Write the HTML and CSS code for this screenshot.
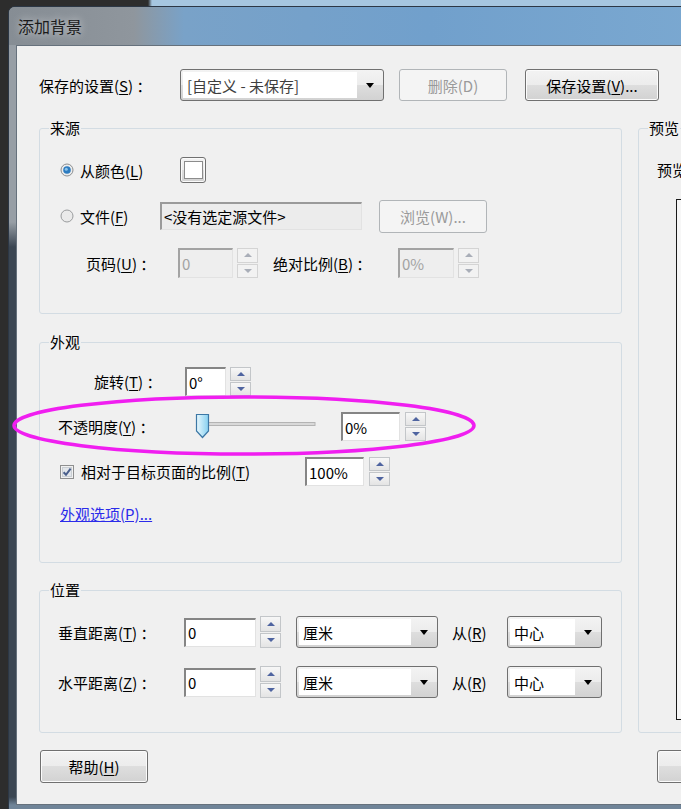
FILE: index.html
```html
<!DOCTYPE html>
<html lang="zh-CN">
  <head>
    <meta charset="UTF-8" />
    <title>添加背景</title>
    <link rel="stylesheet" href="styles.css">
  </head>
  <body>
    <div class="window">
      <div class="titlebar">添加背景</div>

      <div class="client">
        <div class="top-row">
          <span class="top-label">保存的设置(<u>S</u>) ：</span>
          <div class="combo combo-preset">
            <span class="combo-field combo-muted">[自定义 - 未保存]</span>
            <span class="combo-btn"><span class="arrow"></span></span>
          </div>
          <button class="btn btn-delete" disabled>删除(D)</button>
          <button class="btn btn-save">保存设置(<u>V</u>)...</button>
        </div>

        <div class="main">
          <div class="left-col">
            <!-- source -->
            <fieldset class="group">
              <legend>来源</legend>
              <div class="group-body source-body">
                <div class="row row-color">
                  <label class="radio-opt opt-color">
                    <svg width="14" height="14" viewBox="0 0 14 14">
                      <circle cx="7" cy="7" r="6" fill="#ececec" stroke="#8c8e90" />
                      <circle cx="7" cy="7" r="3.8" fill="#2d7cc0" />
                      <circle cx="6.3" cy="6.2" r="1.5" fill="#8cc3ea" />
                    </svg>
                    <span>从颜色(<u>L</u>)</span>
                  </label>
                  <button class="btn swatch"><span class="swatch-inner"></span></button>
                </div>

                <div class="row row-file">
                  <label class="radio-opt opt-file">
                    <svg width="14" height="14" viewBox="0 0 14 14">
                      <circle cx="7" cy="7" r="6" fill="#eaeaea" stroke="#9a9c9e" />
                    </svg>
                    <span>文件(<u>F</u>)</span>
                  </label>
                  <div class="field field-file">&lt;没有选定源文件&gt;</div>
                  <button class="btn btn-browse" disabled>浏览(W)...</button>
                </div>

                <div class="row row-page">
                  <span class="lbl lbl-page">页码(<u>U</u>) ：</span>
                  <div class="field field-disabled field-page">0</div>
                  <div class="spin spin-disabled"><span class="spin-up"></span><span class="spin-down"></span></div>
                  <span class="lbl lbl-scale">绝对比例(<u>B</u>) ：</span>
                  <div class="field field-disabled field-scale">0%</div>
                  <div class="spin spin-disabled"><span class="spin-up"></span><span class="spin-down"></span></div>
                </div>
              </div>
            </fieldset>

            <!-- appearance -->
            <fieldset class="group group-look">
              <legend>外观</legend>
              <div class="group-body look-body">
                <div class="row row-rotate">
                  <span class="lbl lbl-rotate">旋转(<u>T</u>) ：</span>
                  <div class="field field-rotate">0°</div>
                  <div class="spin"><span class="spin-up"></span><span class="spin-down"></span></div>
                </div>

                <div class="row row-opacity">
                  <span class="lbl lbl-opacity">不透明度(<u>Y</u>) ：</span>
                  <svg class="slider" width="121" height="29" viewBox="0 0 121 29">
                    <rect x="13" y="10.5" width="107" height="3" fill="#d9d9d9" stroke="#b4b4b4" stroke-width="1" />
                    <defs>
                      <linearGradient id="thumb" x1="0" y1="0" x2="1" y2="0">
                        <stop offset="0" stop-color="#e9f8fe" />
                        <stop offset="1" stop-color="#86d0f0" />
                      </linearGradient>
                    </defs>
                    <path d="M1.5 2.5 H13.5 V19 L7.5 25.5 L1.5 19 Z" fill="url(#thumb)" stroke="#3c77a5" stroke-width="1.2" />
                  </svg>
                  <div class="field field-opacity">0%</div>
                  <div class="spin spin-opacity"><span class="spin-up"></span><span class="spin-down"></span></div>
                </div>

                <div class="row row-ratio">
                  <svg class="check" width="14" height="14" viewBox="0 0 14 14">
                    <rect x="0.5" y="0.5" width="13" height="13" fill="#f1f1f1" stroke="#8e8f8f" />
                    <rect x="2.5" y="2.5" width="9" height="9" fill="#e2e6ea" stroke="#c9ced3" />
                    <path d="M3.6 7.2 L6 9.8 L10.6 3.6" fill="none" stroke="#4a5f8c" stroke-width="2" />
                  </svg>
                  <span class="lbl lbl-ratio">相对于目标页面的比例(<u>T</u>)</span>
                  <div class="field field-ratio">100%</div>
                  <div class="spin spin-ratio"><span class="spin-up"></span><span class="spin-down"></span></div>
                </div>

                <div class="row row-link">
                  <a href="#" class="look-link">外观选项(P)...</a>
                </div>
              </div>
            </fieldset>

            <!-- position -->
            <fieldset class="group group-pos">
              <legend>位置</legend>
              <div class="group-body pos-body">
                <div class="row row-pos">
                  <span class="lbl lbl-pos">垂直距离(<u>T</u>) ：</span>
                  <div class="field field-pos">0</div>
                  <div class="spin"><span class="spin-up"></span><span class="spin-down"></span></div>
                  <div class="combo combo-unit">
                    <span class="combo-field">厘米</span>
                    <span class="combo-btn"><span class="arrow"></span></span>
                  </div>
                  <span class="lbl lbl-from">从(<u>R</u>)</span>
                  <div class="combo combo-from">
                    <span class="combo-field">中心</span>
                    <span class="combo-btn"><span class="arrow"></span></span>
                  </div>
                </div>

                <div class="row row-pos row-pos2">
                  <span class="lbl lbl-pos">水平距离(<u>Z</u>) ：</span>
                  <div class="field field-pos">0</div>
                  <div class="spin"><span class="spin-up"></span><span class="spin-down"></span></div>
                  <div class="combo combo-unit">
                    <span class="combo-field">厘米</span>
                    <span class="combo-btn"><span class="arrow"></span></span>
                  </div>
                  <span class="lbl lbl-from">从(<u>R</u>)</span>
                  <div class="combo combo-from">
                    <span class="combo-field">中心</span>
                    <span class="combo-btn"><span class="arrow"></span></span>
                  </div>
                </div>
              </div>
            </fieldset>
          </div>

          <!-- preview -->
          <fieldset class="group group-preview">
            <legend>预览</legend>
            <div class="group-body preview-body">
              <div class="preview-label">预览</div>
              <div class="preview-box"></div>
            </div>
          </fieldset>
        </div>

        <div class="bottom-row">
          <button class="btn btn-help">帮助(<u>H</u>)</button>
          <button class="btn btn-ok"></button>
        </div>
      </div>
    </div>

    <svg class="annotation" width="481" height="74" viewBox="0 0 481 74">
      <ellipse cx="240" cy="36.5" rx="230" ry="28.5" fill="none" stroke="#f01ef0" stroke-width="3.5" />
    </svg>
  </body>
</html>
```

FILE: styles.css
```css
body {
  margin: 0;
  height: 809px;
  overflow: hidden;
  position: relative;
  background: linear-gradient(to right, #2d2d2d 0, #2d2d2d 148px, #a6c6e0 152px);
  font-family: "Noto Sans CJK SC", sans-serif;
  font-size: 15px;
  color: #000;
}

u {
  text-decoration: underline;
  text-underline-offset: 2px;
}

.window {
  margin: 6px 0 0 8px;
  width: 780px;
  border: 1px solid #2c3745;
  border-radius: 7px 7px 0 0;
  padding: 0 7px 4px 7px;
  background: linear-gradient(#979ea5 0, #979ea5 215px, #3b4652 240px, #3b4652 790px, #6f8498 798px);
}

.titlebar {
  margin: 0 -7px;
  height: 38px;
  line-height: 38px;
  padding-left: 9px;
  font-size: 16px;
  color: #1b1b1b;
  text-shadow: 0 0 8px rgba(255, 255, 255, 0.7);
  border-radius: 6px 6px 0 0;
  background: linear-gradient(to right, #868d94 0, #8f969d 125px, #79a2c8 175px, #71a0cc 420px, #7eabd2 100%);
}

.client {
  background: #f0f0f0;
  border: 1px solid #66717c;
  padding: 23px 0 21px 22px;
}

/* top row */
.top-row {
  display: flex;
  align-items: center;
  height: 32px;
}

.top-label {
  width: 141px;
  white-space: nowrap;
}

.btn {
  font: inherit;
  color: #000;
  border: 1px solid #707070;
  border-radius: 3px;
  background: linear-gradient(#f3f3f3 0, #ececec 50%, #dedede 50%, #d2d2d2 100%);
  box-shadow: inset 0 0 0 1px #fbfbfb;
  padding: 0;
  cursor: pointer;
}

.btn:disabled {
  color: #9a9a9a;
  border-color: #b1b5b8;
  background: #f4f4f4;
  box-shadow: none;
}

.btn-delete {
  margin-left: 15px;
  width: 108px;
  height: 32px;
}

.btn-save {
  margin-left: 18px;
  width: 134px;
  height: 32px;
}

/* combo boxes */
.combo {
  display: flex;
  flex-shrink: 0;
  box-sizing: border-box;
  border: 1px solid #707070;
  border-radius: 3px;
  padding: 2px 0 2px 2px;
  background: linear-gradient(#f3f3f3 0, #ececec 50%, #dedede 50%, #d2d2d2 100%);
}

.combo-field {
  flex: 1;
  display: flex;
  align-items: center;
  padding-left: 4px;
  background: #fff;
  white-space: nowrap;
}

.combo-muted {
  color: #3e3e3e;
}

.combo-btn {
  width: 26px;
  display: flex;
  align-items: center;
  justify-content: center;
}

.arrow {
  width: 0;
  height: 0;
  border-left: 4px solid transparent;
  border-right: 4px solid transparent;
  border-top: 5px solid #000;
}

.combo-preset {
  width: 204px;
  height: 32px;
}

.combo-unit {
  margin-left: 15px;
  width: 142px;
  height: 32px;
}

.combo-from {
  width: 95px;
  height: 32px;
}

/* group boxes */
.main {
  display: flex;
  gap: 16px;
  margin-top: 18px;
}

.left-col {
  width: 583px;
  flex-shrink: 0;
  display: flex;
  flex-direction: column;
}

.group {
  margin: 0;
  padding: 0;
  min-width: 0;
  border: 1px solid #d3dce3;
  border-radius: 3px;
}

.group legend {
  margin-left: 9px;
  padding: 0 1px;
  line-height: 18px;
}

.group-body {
  padding-left: 18px;
}

.group-look {
  margin-top: 19px;
}

.group-pos {
  margin-top: 18px;
}

.row {
  display: flex;
  align-items: center;
}

.row > * {
  flex-shrink: 0;
}

.lbl {
  white-space: nowrap;
}

/* source */
.source-body {
  padding-bottom: 35px;
}

.row-color {
  margin-top: 17px;
  height: 32px;
}

.radio-opt {
  display: flex;
  align-items: center;
  gap: 6px;
  margin-left: 2px;
}

.opt-color {
  width: 120px;
}

.opt-file {
  width: 100px;
}

.swatch {
  width: 26px;
  height: 26px;
  display: flex;
  align-items: center;
  justify-content: center;
}

.swatch-inner {
  width: 17px;
  height: 16px;
  background: #fff;
  border: 1px solid #8c8c8c;
}

.row-file {
  margin-top: 13px;
  height: 34px;
}

.field {
  box-sizing: border-box;
  display: flex;
  align-items: center;
  padding-left: 2px;
  background: #fff;
  border-top: 2px solid #858585;
  border-left: 2px solid #858585;
  border-right: 1px solid #e2e2e2;
  border-bottom: 1px solid #e2e2e2;
  white-space: nowrap;
}

.field-file {
  width: 202px;
  height: 28px;
  background: #ececec;
  border-top-color: #9a9a9a;
  border-left-color: #9a9a9a;
}

.btn-browse {
  margin-left: 17px;
  width: 108px;
  height: 33px;
}

.row-page {
  margin-top: 15px;
  height: 30px;
}

.lbl-page {
  margin-left: 28px;
  width: 92px;
}

.lbl-scale {
  margin-left: 15px;
  width: 125px;
}

.field-disabled {
  color: #a3a3a3;
  background: #eeeeee;
  border-top-color: #a3a3a3;
  border-left-color: #a3a3a3;
}

.field-page {
  width: 55px;
  height: 30px;
}

.field-scale {
  width: 56px;
  height: 30px;
}

/* spinners */
.spin {
  margin-left: 4px;
  width: 21px;
  align-self: stretch;
  display: flex;
  flex-direction: column;
  gap: 1px;
}

.spin-up,
.spin-down {
  flex: 1;
  display: flex;
  align-items: center;
  justify-content: center;
  border: 1px solid #c3c6c9;
  background: linear-gradient(#f7f7f7, #e4e4e4);
}

.spin-up::after {
  content: "";
  border-left: 4px solid transparent;
  border-right: 4px solid transparent;
  border-bottom: 4px solid #4f64a0;
}

.spin-down::after {
  content: "";
  border-left: 4px solid transparent;
  border-right: 4px solid transparent;
  border-top: 4px solid #4f64a0;
}

.spin-disabled .spin-up,
.spin-disabled .spin-down {
  border-color: #d4d4d4;
  background: #f2f2f2;
}

.spin-disabled .spin-up::after {
  border-bottom-color: #a9aeb8;
}

.spin-disabled .spin-down::after {
  border-top-color: #a9aeb8;
}

/* appearance */
.look-body {
  padding-bottom: 39px;
}

.row-rotate {
  margin-top: 16px;
  height: 29px;
}

.lbl-rotate {
  margin-left: 36px;
  width: 91px;
}

.field-rotate {
  width: 41px;
  height: 29px;
}

.row-opacity {
  margin-top: 16px;
  height: 29px;
}

.lbl-opacity {
  width: 137px;
}

.field-opacity {
  margin-left: 25px;
  width: 59px;
  height: 29px;
}

.spin-opacity {
  margin-left: 5px;
}

.row-ratio {
  margin-top: 16px;
  height: 29px;
}

.check {
  margin-left: 2px;
}

.lbl-ratio {
  margin-left: 7px;
  width: 224px;
}

.field-ratio {
  width: 59px;
  height: 29px;
}

.spin-ratio {
  margin-left: 5px;
}

.row-link {
  margin-top: 17px;
  height: 20px;
}

.look-link {
  margin-left: 2px;
  color: #2b2bea;
  text-decoration: underline;
}

/* position */
.pos-body {
  padding-bottom: 34px;
}

.row-pos {
  margin-top: 17px;
  height: 32px;
}

.row-pos2 {
  margin-top: 18px;
}

.lbl-pos {
  width: 126px;
}

.field-pos {
  width: 72px;
  height: 29px;
}

.lbl-from {
  margin-left: 14px;
  width: 55px;
}

/* preview */
.group-preview {
  width: 200px;
  flex-shrink: 0;
}

.preview-body {
  padding-left: 18px;
}

.preview-label {
  margin-top: 23px;
  line-height: 20px;
  white-space: nowrap;
}

.preview-box {
  margin: 19px 0 0 19px;
  height: 519px;
  border: 1px solid #1a1a1a;
  background: #f7f7f7;
}

/* bottom buttons */
.bottom-row {
  display: flex;
  margin-top: 17px;
}

.btn-help {
  margin-left: 1px;
  width: 108px;
  height: 33px;
}

.btn-ok {
  margin-left: 509px;
  width: 108px;
  height: 33px;
}

.annotation {
  position: absolute;
  left: 4px;
  top: 389px;
}
```
